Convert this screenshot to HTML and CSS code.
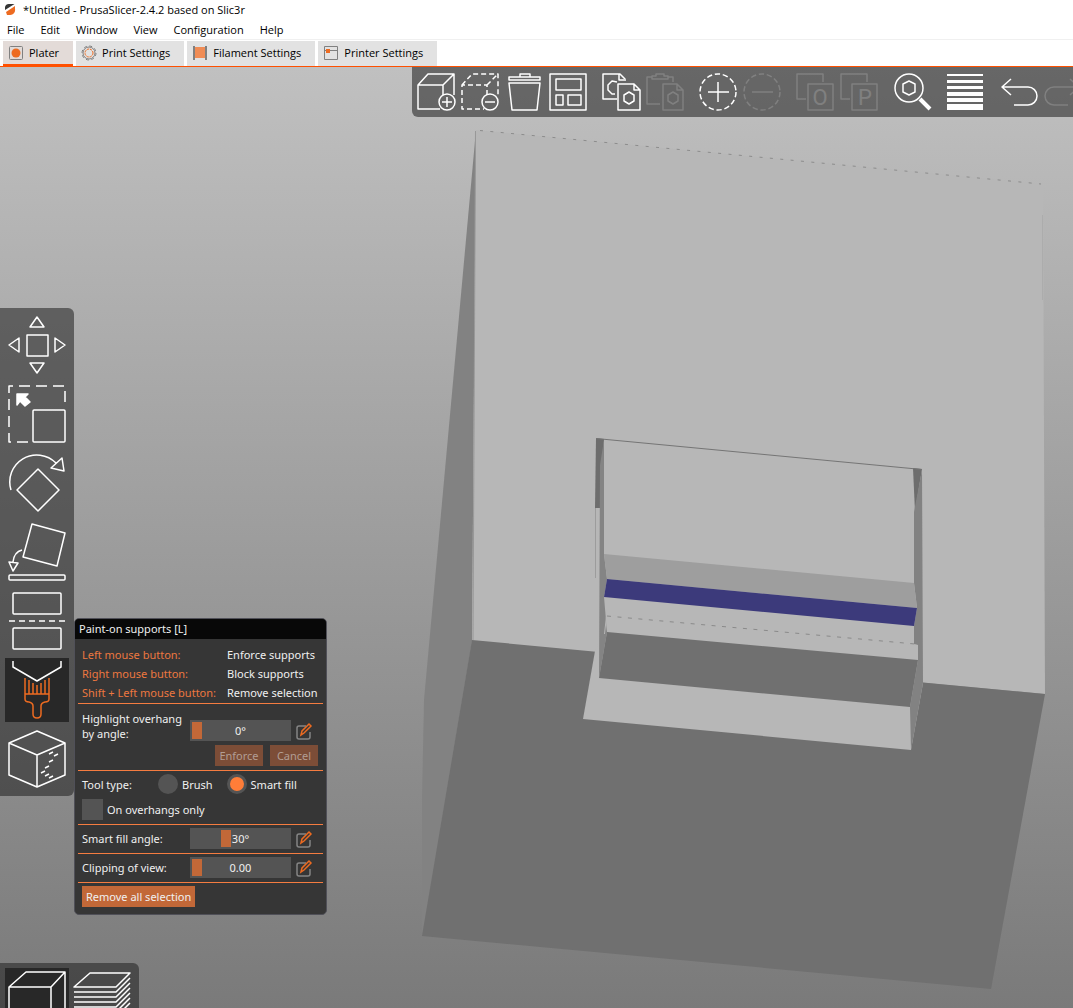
FILE: index.html
```html
<!DOCTYPE html>
<html lang="en">
<head>
    <meta charset="UTF-8">
    <meta name="viewport" content="width=device-width, initial-scale=1.0">
    <title>*Untitled - PrusaSlicer-2.4.2 based on Slic3r</title>
    <link rel="stylesheet" href="styles.css">
</head>
<body>
    <header class="titlebar">
        <svg class="app-icon" viewBox="0 0 12 12" aria-hidden="true">
            <path d="M1 7V4a4 4 0 0 1 4-3h5.500z" fill="#363636"/>
            <path d="M2 9l9-6v3a5 5 0 0 1-5 6H3z" fill="#ed6b21"/>
        </svg>
        <h1>*Untitled - PrusaSlicer-2.4.2 based on Slic3r</h1>
    </header>

    <nav class="menubar">
        <a href="#">File</a>
        <a href="#">Edit</a>
        <a href="#">Window</a>
        <a href="#">View</a>
        <a href="#">Configuration</a>
        <a href="#">Help</a>
    </nav>

    <div class="tabs">
        <button class="tab active">
            <svg viewBox="0 0 16 16"><rect x="1.5" y="1.5" width="13" height="13" rx="1" fill="none" stroke="#808080"/><circle cx="8" cy="8" r="4.500" fill="#ed6b21"/></svg>
            Plater
        </button>
        <button class="tab">
            <svg viewBox="0 0 16 16" fill="none"><circle cx="8" cy="8" r="6" stroke="#808080"/><circle cx="8" cy="8" r="7" stroke="#808080" stroke-dasharray="3 2.5"/><circle cx="8" cy="8" r="4" stroke="#ed6b21" stroke-dasharray="2.4 .8"/></svg>
            Print Settings
        </button>
        <button class="tab">
            <svg viewBox="0 0 16 16"><rect x="3" y="2" width="10" height="11" fill="#f08c55"/><path d="M2 1v14M14 1v14" stroke="#808080" stroke-width="2"/></svg>
            Filament Settings
        </button>
        <button class="tab">
            <svg viewBox="0 0 16 16"><path d="M1.500 1.500h13v13h-13zM1.500 5.500h13" fill="none" stroke="#808080"/><rect x="3" y="4" width="4" height="4" fill="#ed6b21"/></svg>
            Printer Settings
        </button>
    </div>

    <main class="scene">
        <svg class="model" viewBox="0 67 1073 941" preserveAspectRatio="xMinYMin slice" aria-label="Model">
            <!-- outer faces -->
            <polygon points="476,130 472,641 422,936 422,800 424,700" fill="#828282"/>
            <polygon points="476,130 1043,184 1045,694 472,641" fill="#b7b7b7"/>
            <polygon points="472,640 1045,694 991,989 422,936" fill="#707070"/>
            <path d="M480 130.500L1041 184" stroke="#8c8c8c" stroke-dasharray="3 7.400"/>
            <path d="M475.500 131L473 640" stroke="#989898"/>
            <path d="M1042.500 215V300" stroke="#acacac"/>
            <!-- pocket -->
            <polygon points="595,651 600,640 924,660 923,683 911,750 583,719" fill="#b7b7b7"/>
            <polygon points="596,438 922,469 923,683 910,707 599,678 600,508 595,508" fill="#b7b7b7"/>
            <polygon points="596,438 604,439 600,508 595,508" fill="#6d6d6d"/>
            <polygon points="604,440 600,465 599,678 607,632 604,597 607,579 604,554" fill="#848484"/>
            <polygon points="913,468 922,469 915,512" fill="#6d6d6d"/>
            <polygon points="922,470 923,683 911,750 910,707 918,660 918,645 914,644 914,626 917,608 914,583 914,512" fill="#828282"/>
            <polygon points="604,554 914,583 917,608 607,579" fill="#9e9e9e"/>
            <polygon points="607,579 917,608 914,626 604,597" fill="#3c3a7b"/>
            <polygon points="606,615 918,645 918,660 607,632" fill="#b7b7b7"/>
            <path d="M607 616L915 644" stroke="#8a8a8a" stroke-dasharray="4 6.500"/>
            <polygon points="607,632 918,660 910,707 599,678" fill="#707070"/>
            <path d="M596 438.500L922 469.500" stroke="#757575"/>
            <path d="M595.500 508V578" stroke="#9c9c9c"/>
            <path d="M604.500 634L606.500 616" stroke="#b7b7b7"/>
        </svg>

        <div class="toolbar">
            <div class="group">
                <button aria-label="Add"><svg viewBox="0 0 40 40"><path d="M27 23V13H2v24h22M2 13L12 2h26v21M27 13L38 2"/><circle cx="31" cy="30" r="8"/><path d="M31 25v10M26 30h10"/></svg></button>
                <button aria-label="Delete"><svg viewBox="0 0 40 40"><path d="M27 23V13H2v24h22M2 13L12 2h26v21M27 13L38 2" stroke-dasharray="5 3"/><circle cx="30" cy="30" r="8"/><path d="M25 30h10"/></svg></button>
                <button aria-label="Delete all"><svg viewBox="0 0 40 40"><path d="M5 5h31v3H5zM16 5V2h10v3M5 11h31l-3 27H8z"/></svg></button>
                <button aria-label="Arrange"><svg viewBox="0 0 40 40"><path d="M2 2h36v36H2zM8 7h25v11H8zM8 23h7v10H8zM20 23h13v10H20z"/></svg></button>
            </div>
            <div class="group">
                <button aria-label="Copy"><svg viewBox="0 0 40 40"><path d="M16 27H2V2h17l5 5v2M18 2v6h5M16 10l-5-1-4 4v5l4 4h3M17 12h16l6 6v20H17zM33 12v6h6M28 20l5 3v6l-5 3-5-3v-6z"/></svg></button>
                <button aria-label="Paste" disabled><svg viewBox="0 0 40 40"><path d="M15 32H2V5h5M23 5h5v5M7 7V4h4V2h8v2h4v3zM18 12h14l6 6v20H18zM32 12v6h6M28 20l5 3v6l-5 3-5-3v-6z"/></svg></button>
            </div>
            <div class="group">
                <button aria-label="Add instance"><svg viewBox="0 0 40 40"><circle cx="20" cy="20" r="18" stroke-dasharray="5.400 2.700"/><path d="M10 20h21M20 10v20"/></svg></button>
                <button aria-label="Remove instance" disabled><svg viewBox="0 0 40 40"><circle cx="20" cy="20" r="18" stroke-dasharray="5.400 2.700"/><path d="M10 20h21"/></svg></button>
            </div>
            <div class="group">
                <button aria-label="Split to objects" disabled><svg viewBox="0 0 40 40"><path d="M11 27H2V2h26v8M13 12h25v26H13z"/><text x="25" y="33">O</text></svg></button>
                <button aria-label="Split to parts" disabled><svg viewBox="0 0 40 40"><path d="M11 27H2V2h26v8M13 12h25v26H13z"/><text x="26" y="33">P</text></svg></button>
            </div>
            <div class="group">
                <button aria-label="Search"><svg viewBox="0 0 40 40"><circle cx="17" cy="16" r="14"/><path d="M17 9l6 3v8l-6 3-6-3v-8z"/><path d="M28 27l10 10" stroke-width="4"/></svg></button>
            </div>
            <div class="group">
                <button aria-label="Variable layer height"><svg viewBox="0 0 40 40"><path d="M2 2h36v2H2zM2 8h36v3H2zM2 14h36v3H2zM2 20h36v4H2zM2 26h36v4H2zM2 32h36v6H2z" fill="#fff" stroke="none"/></svg></button>
            </div>
            <div class="group">
                <button aria-label="Undo"><svg viewBox="0 0 40 40"><path d="M13 7L4 15l9 8M4 15h26a9 9 0 0 1 0 18H16"/></svg></button>
                <button aria-label="Redo" disabled><svg viewBox="0 0 40 40"><path d="M28 7l9 8-9 8M37 15H12a9 9 0 0 0 0 18h14"/></svg></button>
            </div>
        </div>

        <div class="gizmos">
            <button aria-label="Move"><svg viewBox="0 0 64 64"><path d="M22 22h21v21H22zM32 4l7 10H25zM32 60l-7-10h14zM4 32l10-7v14zM60 32l-10 7V25z"/></svg></button>
            <button aria-label="Scale"><svg viewBox="0 0 64 64"><path d="M23 60H4V4h56v20" stroke-dasharray="11 6"/><rect x="28" y="28" width="32" height="32" rx="1"/><path d="M12 12h11l-3 3 5 5-5 4-5-5-3 4z" fill="#fff"/></svg></button>
            <button aria-label="Rotate"><svg viewBox="0 0 64 64"><path d="M33 18l21 21-21 21-21-21zM6 39A27 27 0 0 1 51 12M57 7l2 13-13-3z"/></svg></button>
            <button aria-label="Place on face"><svg viewBox="0 0 64 64"><path d="M27 4l33 9-8 33-34-9zM17 30q-8 2-9 12M4 42l9 1-5 8z"/><rect x="4" y="55" width="56" height="5" rx="1"/></svg></button>
            <button aria-label="Cut"><svg viewBox="0 0 64 64"><rect x="8" y="4" width="48" height="21" rx="1"/><rect x="8" y="39" width="48" height="21" rx="1"/><path d="M4 32h56" stroke-dasharray="6 4"/></svg></button>
            <button class="selected" aria-label="Paint-on supports"><svg viewBox="0 0 64 64"><path d="M8 3v6l24 14L56 9V3"/><path class="brush" d="M20 20v16M24 22v14M28 25v11M32 27v9M36 25v11M40 22v14M44 20v16M20 36h24v5q0 3-4 3-4 1-4 4v8q0 4-4 4t-4-4v-8q0-3-4-4-4 0-4-3z"/></svg></button>
            <button aria-label="Seam painting"><svg viewBox="0 0 64 64"><path d="M32 4l28 12v32L32 60 4 48V16zM4 16l28 12 28-12M32 28v32"/><path d="M44 27l4-2M49 29l4-2M44 35l4-2M40 41l4-2M36 46l4-2M40 49l4-2M44 51l4-2"/></svg></button>
        </div>

        <section class="panel">
            <h2>Paint-on supports [L]</h2>
            <dl class="shortcuts">
                <dt>Left mouse button:</dt><dd>Enforce supports</dd>
                <dt>Right mouse button:</dt><dd>Block supports</dd>
                <dt>Shift + Left mouse button:</dt><dd>Remove selection</dd>
            </dl>
            <div class="section overhang">
                <div class="row">
                    <label for="overhang">Highlight overhang by angle:</label>
                    <div class="slider"><input type="range" id="overhang" min="0" max="90" value="0"><output for="overhang">0°</output></div>
                    <button class="edit" aria-label="Edit overhang angle"><svg viewBox="0 0 18 18"><path d="M11 4H4q-2 0-2 2v9q0 2 2 2h9q2 0 2-2v-5" stroke="#858585"/><path d="M6 13l1-4 7-7 2 2-7 7z" stroke="#ed6b21"/></svg></button>
                </div>
                <div class="actions">
                    <button class="btn" disabled>Enforce</button>
                    <button class="btn" disabled>Cancel</button>
                </div>
            </div>
            <div class="section">
                <div class="tool-type">
                    <span>Tool type:</span>
                    <label><input type="radio" name="tool"> Brush</label>
                    <label><input type="radio" name="tool" checked> Smart fill</label>
                </div>
                <label class="check"><input type="checkbox"> On overhangs only</label>
            </div>
            <div class="section">
                <div class="row">
                    <label for="fill">Smart fill angle:</label>
                    <div class="slider"><input type="range" id="fill" min="0" max="90" value="30"><output for="fill">30°</output></div>
                    <button class="edit" aria-label="Edit smart fill angle"><svg viewBox="0 0 18 18"><path d="M11 4H4q-2 0-2 2v9q0 2 2 2h9q2 0 2-2v-5" stroke="#858585"/><path d="M6 13l1-4 7-7 2 2-7 7z" stroke="#ed6b21"/></svg></button>
                </div>
            </div>
            <div class="section">
                <div class="row">
                    <label for="clip">Clipping of view:</label>
                    <div class="slider"><input type="range" id="clip" min="0" max="1" step="0.01" value="0"><output for="clip">0.00</output></div>
                    <button class="edit" aria-label="Edit clipping"><svg viewBox="0 0 18 18"><path d="M11 4H4q-2 0-2 2v9q0 2 2 2h9q2 0 2-2v-5" stroke="#858585"/><path d="M6 13l1-4 7-7 2 2-7 7z" stroke="#ed6b21"/></svg></button>
                </div>
            </div>
            <div class="section">
                <button class="btn">Remove all selection</button>
            </div>
        </section>

        <div class="views">
            <button class="selected" aria-label="3D editor view"><svg viewBox="0 0 64 64"><path d="M4 19h42v41H4zM4 19L21 4h39v41L46 60M46 19L60 4"/></svg></button>
            <button aria-label="Preview"><svg viewBox="0 0 64 64"><path d="M4 19h42L60 5H20zM4 24h42l14-14M4 29h42l14-14M4 34h42l14-14M4 39h42l14-14M4 44h42l14-14M4 49h42l14-14"/></svg></button>
        </div>
    </main>
</body>
</html>
```

FILE: styles.css
```css
* {
    margin: 0;
    padding: 0;
    box-sizing: border-box;
}

body {
    font-family: "Open Sans", "Noto Sans", sans-serif;
    font-size: 11px;
    height: 100vh;
    background: #fff;
    color: #000;
    display: flex;
    flex-direction: column;
    overflow: hidden;
}

button {
    font: inherit;
    color: inherit;
    border: none;
    background: none;
    cursor: pointer;
}

.titlebar {
    display: flex;
    align-items: center;
    gap: 7px;
    height: 18px;
    padding-left: 4px;
}

.titlebar h1 {
    font-size: 11px;
    font-weight: 400;
}

.app-icon {
    width: 12px;
    height: 12px;
}

.menubar {
    display: flex;
    align-items: center;
    gap: 16px;
    height: 22px;
    padding: 2px 7px 0;
    border-bottom: 1px solid #f0f0f0;
}

.menubar a {
    color: #000;
    text-decoration: none;
}

.tabs {
    display: flex;
    gap: 3px;
    height: 27px;
    padding: 1px 3px 0;
    border-bottom: 1px solid #ff5000;
}

.tab {
    display: flex;
    align-items: center;
    gap: 5px;
    padding: 0 14px 2px 5px;
    background: #e2e2e2;
}

.tab.active {
    background: #e3dbd8;
    border-bottom: 2px solid #ff5000;
    padding-bottom: 0;
}

.tab svg {
    width: 16px;
    height: 16px;
}

/* 3D canvas */
.scene {
    flex: 1;
    min-height: 0;
    position: relative;
    overflow: hidden;
    background: linear-gradient(#c0c0c0, #7a7a7a);
}

.model {
    display: block;
    width: 100%;
    height: 100%;
}

.toolbar,
.gizmos,
.views {
    position: absolute;
    display: flex;
    padding: 5px;
    background: rgba(35, 35, 35, 0.57);
}

.toolbar svg,
.gizmos svg,
.views svg {
    display: block;
    width: 100%;
    height: 100%;
    fill: none;
    stroke: #fff;
    stroke-width: 1.5;
    stroke-linejoin: round;
}

.toolbar {
    top: 0;
    left: 412px;
    right: 0;
    gap: 13px;
    padding: 5px 4px;
    border-bottom-left-radius: 6px;
    overflow: hidden;
}

.group {
    display: flex;
    flex-shrink: 0;
    gap: 4px;
}

.group button {
    width: 40px;
    height: 40px;
}

.group text {
    font-family: Roboto, sans-serif;
    font-size: 22px;
    font-weight: 400;
    text-anchor: middle;
    fill: #fff;
    stroke: none;
}

.group button:disabled {
    opacity: 0.17;
}

.gizmos {
    top: 241px;
    left: 0;
    flex-direction: column;
    gap: 5px;
    border-radius: 0 6px 6px 0;
}

.gizmos button,
.views button {
    width: 64px;
    height: 64px;
}

.gizmos .selected,
.views .selected {
    background: #282828;
}

.gizmos .brush {
    stroke: #ed6b21;
}

.views {
    left: 0;
    bottom: -29px;
    gap: 1px;
    border-top-right-radius: 6px;
}

/* supports panel */
.panel {
    position: absolute;
    top: 551px;
    left: 74px;
    width: 253px;
    padding-bottom: 3px;
    font-family: "Noto Sans", sans-serif;
    font-size: 11px;
    line-height: 15px;
    color: #f0f0f0;
    background: #363636;
    border: 1px solid #505058;
    border-radius: 5px;
    overflow: hidden;
}

.panel h2 {
    padding: 0 4px;
    font-size: 11px;
    font-weight: 400;
    line-height: 20px;
    background: #080808;
}

.shortcuts {
    display: grid;
    grid-template-columns: 145px 1fr;
    padding: 6px 7px 1px;
    line-height: 19px;
}

.shortcuts dt {
    color: #ed7840;
}

.section {
    margin: 0 3px;
    padding: 3px 4px 4px;
    border-top: 1px solid #f57c40;
}

.overhang {
    padding-top: 7px;
}

.row {
    display: flex;
    align-items: flex-end;
}

.row label {
    width: 108px;
    line-height: 15px;
    padding-right: 4px;
    align-self: center;
}

.slider {
    position: relative;
    width: 101px;
    height: 21px;
}

.slider input {
    display: block;
    width: 100%;
    height: 21px;
    padding: 0 2px;
    appearance: none;
    background: #545454;
}

.slider input::-webkit-slider-thumb {
    appearance: none;
    width: 10px;
    height: 17px;
    background: #c26838;
}

.slider output {
    position: absolute;
    inset: 0;
    line-height: 21px;
    text-align: center;
    pointer-events: none;
}

.edit {
    width: 18px;
    height: 18px;
    margin: 0 0 1px 4px;
}

.edit svg {
    display: block;
    fill: none;
    stroke-width: 1.5;
}

.actions {
    display: flex;
    justify-content: flex-end;
    gap: 7px;
    margin-top: 4px;
    padding-right: 1px;
}

.btn {
    height: 21px;
    padding: 0 4px;
    background: #c26838;
    white-space: nowrap;
}

.actions .btn {
    width: 48px;
}

.btn:disabled {
    background: #7c4d37;
    color: #b29d93;
}

.tool-type {
    display: flex;
    align-items: center;
    height: 20px;
}

.tool-type span {
    width: 76px;
}

.tool-type label {
    display: flex;
    align-items: center;
    gap: 4px;
    margin-right: 14px;
}

.tool-type input {
    appearance: none;
    width: 20px;
    height: 20px;
    border-radius: 50%;
    background: #545454;
}

.tool-type input:checked {
    background: #ff7d38;
    border: 3px solid #545454;
}

.check {
    display: flex;
    align-items: center;
    gap: 4px;
    margin-top: 5px;
}

.check input {
    appearance: none;
    width: 21px;
    height: 21px;
    background: #545454;
}
```
